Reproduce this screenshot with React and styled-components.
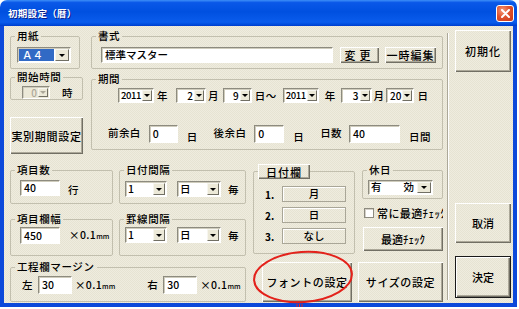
import React from 'react';
import styled, { createGlobalStyle, css } from 'styled-components';

const GlobalStyle = createGlobalStyle`
  html, body {
    margin: 0;
    padding: 0;
    background: #fff;
  }
  body {
    font-family: "Noto Sans CJK JP", "Noto Sans", sans-serif;
    font-weight: 500;
    color: #000;
  }
`;

const sunken = css`
  box-sizing: border-box;
  border: 1px solid;
  border-color: #8d8b7f #fff #fff #8d8b7f;
  box-shadow: inset 1px 1px #cfccbc;
`;

const Window = styled.div`
  position: relative;
  width: 517px;
  height: 307px;
  display: flex;
  flex-direction: column;
`;

const TitleBar = styled.div`
  height: 26px;
  flex: none;
  box-sizing: border-box;
  display: flex;
  align-items: center;
  justify-content: space-between;
  padding: 0 3px 0 8px;
  border-radius: 7px 7px 0 0;
  background: linear-gradient(
    to bottom,
    #3d8ff8 0%,
    #0a58e8 10%,
    #0050e0 45%,
    #0a5cec 85%,
    #004cdc 94%,
    #003ccc 100%
  );
`;

const Title = styled.span`
  color: #fff;
  font-size: 9.5px;
  font-weight: bold;
  letter-spacing: 0.3px;
  text-shadow: 1px 1px #0a1c8a;
`;

const CloseButton = styled.div`
  width: 18px;
  height: 17px;
  box-sizing: border-box;
  border: 1px solid #fff;
  border-radius: 3px;
  background: radial-gradient(circle at 35% 30%, #f39a7a 0%, #e0532e 45%, #c8381a 100%);
  display: flex;
  align-items: center;
  justify-content: center;
`;

const Frame = styled.div`
  flex: 1;
  display: flex;
  border: 4px solid #0b48da;
  border-top: 0;
  padding: 4px 0 0 6px;
  background-color: #ece9d8;
  background-image: repeating-conic-gradient(#efecdf 0 25%, #e6e3d2 0 50%);
  background-size: 2px 2px;
`;

const Main = styled.div`
  width: 433px;
  flex: none;
  display: flex;
  flex-direction: column;
`;

const Row = styled.div`
  display: flex;
  align-items: flex-start;
  margin-top: ${(p) => p.$mt || 0}px;
`;

const Column = styled.div`
  width: ${(p) => p.$w}px;
  flex: none;
  display: flex;
  flex-direction: column;
  margin-left: ${(p) => p.$ml || 0}px;
`;

const Group = styled.fieldset`
  box-sizing: border-box;
  width: ${(p) => p.$w}px;
  height: ${(p) => p.$h}px;
  flex: none;
  margin: ${(p) => p.$mt || 0}px 0 0 ${(p) => p.$ml || 0}px;
  padding: 0;
  min-inline-size: 0;
  border: 1px solid #c2bfae;
  border-radius: 2px;
`;

const Legend = styled.legend`
  padding: 0 2px;
  margin-left: ${(p) => (p.$ml === undefined ? 4 : p.$ml)}px;
  height: ${(p) => p.$h || 12}px;
  font-size: 10.5px;
  line-height: 12px;
  letter-spacing: 0.6px;
  ${(p) =>
    p.$bare &&
    css`
      padding: 0;
    `}
`;

const Line = styled.div`
  display: flex;
  align-items: ${(p) => p.$align || 'center'};
  padding-left: ${(p) => p.$pl || 0}px;
  margin-top: ${(p) => p.$mt || 0}px;
`;

const Text = styled.span`
  flex: none;
  font-size: ${(p) => p.$size || 10.5}px;
  line-height: 12px;
  letter-spacing: 0.4px;
  white-space: nowrap;
  margin-left: ${(p) => p.$ml || 0}px;
  margin-top: ${(p) => p.$mt || 0}px;
`;

const Small = styled.span`
  font-size: 7px;
  letter-spacing: 0;
`;

const Field = styled.div`
  ${sunken};
  width: ${(p) => p.$w}px;
  height: ${(p) => p.$h || 16}px;
  flex: none;
  margin-left: ${(p) => p.$ml || 0}px;
  background: #fff;
  padding-left: 3px;
  font-size: 10.5px;
  line-height: ${(p) => (p.$h || 16) - 2}px;
  white-space: nowrap;
  overflow: hidden;
`;

const Combo = styled.div`
  ${sunken};
  width: ${(p) => p.$w}px;
  height: ${(p) => p.$h || 16}px;
  flex: none;
  display: flex;
  margin-left: ${(p) => p.$ml || 0}px;
  padding: 1px;
  background: ${(p) => (p.$disabled ? '#ece9d8' : '#fff')};
`;

const ComboText = styled.div`
  flex: 1;
  min-width: 0;
  display: flex;
  align-items: center;
  justify-content: ${(p) => (p.$right ? 'flex-end' : p.$spread ? 'space-between' : 'flex-start')};
  padding: 0 ${(p) => (p.$spread ? 3 : 1)}px 0 1px;
  font-size: ${(p) => p.$size || 10.5}px;
  letter-spacing: ${(p) => p.$ls || 0}px;
  line-height: 1;
  white-space: nowrap;
  color: ${(p) => (p.$disabled ? '#aca899' : '#000')};
  ${(p) =>
    p.$selected &&
    css`
      background: #316ac5;
      color: #fff;
      margin-right: 1px;
      padding-left: 3px;
    `}
`;

const DropButton = styled.div`
  width: ${(p) => p.$w || 10}px;
  flex: none;
  box-sizing: border-box;
  border: 1px solid;
  border-color: #f7f6f0 #716f64 #716f64 #f7f6f0;
  background: #ece9d8;
  display: flex;
  align-items: center;
  justify-content: center;
  &::after {
    content: '';
    border-left: 3px solid transparent;
    border-right: 3px solid transparent;
    border-top: 3px solid ${(p) => (p.$disabled ? '#aca899' : '#000')};
  }
`;

const Button = styled.button`
  box-sizing: border-box;
  width: ${(p) => p.$w}px;
  height: ${(p) => p.$h}px;
  flex: none;
  margin: ${(p) => p.$mt || 0}px 0 0 ${(p) => p.$ml || 0}px;
  padding: 0;
  border: 0;
  background: transparent;
  font-family: inherit;
  font-weight: 500;
  font-size: 11px;
  letter-spacing: ${(p) => (p.$ls === undefined ? 0.6 : p.$ls)}px;
  color: #000;
  white-space: nowrap;
  display: flex;
  align-items: center;
  justify-content: center;
  box-shadow: inset 1px 1px #fff, inset -1px -1px #716f64, inset -2px -2px #aca899;
  ${(p) =>
    p.$default &&
    css`
      border: 1px solid #1a1a1a;
    `}
`;

const DateRow = styled.div`
  display: flex;
  align-items: center;
  padding-left: 11px;
  margin-top: ${(p) => p.$mt || 0}px;
`;

const DateNo = styled.span`
  width: 17px;
  flex: none;
  font-size: 10px;
  font-weight: bold;
`;

const DateCell = styled.div`
  box-sizing: border-box;
  width: 64px;
  height: 16px;
  border: 1px solid #a9a697;
  box-shadow: inset 1px 1px #fff;
  font-size: 10.5px;
  line-height: 14px;
  text-align: center;
`;

const CheckRow = styled.div`
  display: flex;
  align-items: center;
  width: 79px;
  height: 12px;
  margin: ${(p) => p.$mt || 0}px 0 0 2px;
  overflow: hidden;
`;

const CheckBox = styled.span`
  box-sizing: border-box;
  width: 10px;
  height: 10px;
  flex: none;
  background: #fff;
  border: 1px solid #8d8b7f;
  box-shadow: inset 1px 1px #d4d0c8;
`;

const Separator = styled.div`
  width: 0;
  flex: none;
  border-left: 1px solid #aca899;
  border-right: 1px solid #fff;
  margin: 3px 6px 3px 4px;
`;

const Side = styled.div`
  width: 56px;
  flex: none;
  display: flex;
  flex-direction: column;
`;

const Marker = styled.svg`
  position: absolute;
  left: 250px;
  top: 248px;
  width: 110px;
  height: 61px;
  overflow: visible;
  pointer-events: none;
`;

const Unit = ({ ml }) => (
  <Text $ml={ml}>
    ×0.1<Small>mm</Small>
  </Text>
);

const Year = ({ ml }) => (
  <Combo $w={36} $h={15} $ml={ml}>
    <ComboText $size={9.5} $ls={-0.4}>2011</ComboText>
    <DropButton />
  </Combo>
);

const Day = ({ w, ml, value }) => (
  <Combo $w={w} $h={15} $ml={ml}>
    <ComboText $right $size={10}>{value}</ComboText>
    <DropButton />
  </Combo>
);

export default function App() {
  return (
    <>
      <GlobalStyle />
      <Window>
        <TitleBar>
          <Title>初期設定（暦）</Title>
          <CloseButton>
            <svg width="9" height="9" viewBox="0 0 9 9">
              <path d="M1 1 L8 8 M8 1 L1 8" stroke="#fff" strokeWidth="2" strokeLinecap="round" />
            </svg>
          </CloseButton>
        </TitleBar>
        <Frame>
          <Main>
            <Row>
              <Group $w={70} $h={39}>
                <Legend>用紙</Legend>
                <Line $mt={5} $pl={6}>
                  <Combo $w={54} $h={16}>
                    <ComboText $selected>Ａ４</ComboText>
                    <DropButton $w={14} />
                  </Combo>
                </Line>
              </Group>
              <Group $w={352} $h={39} $ml={11}>
                <Legend>書式</Legend>
                <Line $mt={5} $pl={9}>
                  <Field $w={232} $h={16}>標準マスター</Field>
                  <Button $w={39} $h={16} $ml={7} $ls={4}>変更</Button>
                  <Button $w={51} $h={16} $ml={6} $ls={1}>一時編集</Button>
                </Line>
              </Group>
            </Row>

            <Row $mt={2}>
              <Column $w={73}>
                <Group $w={73} $h={29}>
                  <Legend>開始時間</Legend>
                  <Line $mt={3} $pl={11}>
                    <Combo $w={28} $h={13} $disabled>
                      <ComboText $right $disabled $size={10}>0</ComboText>
                      <DropButton $disabled />
                    </Combo>
                    <Text $ml={12}>時</Text>
                  </Line>
                </Group>
                <Button $w={73} $h={37} $mt={17} $ls={0.7}>実別期間設定</Button>
              </Column>
              <Group $w={352} $h={77} $ml={8} $mt={2}>
                <Legend>期間</Legend>
                <Line $mt={3} $pl={26}>
                  <Year />
                  <Text $ml={3}>年</Text>
                  <Day w={30} ml={8} value="2" />
                  <Text $ml={2}>月</Text>
                  <Day w={29} ml={4} value="9" />
                  <Text $ml={3}>日～</Text>
                  <Year ml={6} />
                  <Text $ml={6}>年</Text>
                  <Day w={31} ml={5} value="3" />
                  <Text $ml={2}>月</Text>
                  <Day w={28} ml={2} value="20" />
                  <Text $ml={3}>日</Text>
                </Line>
                <Line $mt={22} $pl={16} $align="flex-start">
                  <Text $mt={2}>前余白</Text>
                  <Field $w={29} $h={18} $ml={8}>0</Field>
                  <Text $ml={9} $mt={6}>日</Text>
                  <Text $ml={16} $mt={2}>後余白</Text>
                  <Field $w={30} $h={18} $ml={8}>0</Field>
                  <Text $ml={9} $mt={6}>日</Text>
                  <Text $ml={16} $mt={2}>日数</Text>
                  <Field $w={51} $h={18} $ml={7}>40</Field>
                  <Text $ml={9} $mt={6}>日間</Text>
                </Line>
              </Group>
            </Row>

            <Row $mt={10}>
              <Column $w={103}>
                <Group $w={103} $h={40}>
                  <Legend>項目数</Legend>
                  <Line $mt={4} $pl={9}>
                    <Field $w={40} $h={16}>40</Field>
                    <Text $ml={8} $mt={3}>行</Text>
                  </Line>
                </Group>
                <Group $w={103} $h={43} $mt={9}>
                  <Legend>項目欄幅</Legend>
                  <Line $mt={2} $pl={9}>
                    <Field $w={40} $h={17}>450</Field>
                    <Unit ml={9} />
                  </Line>
                </Group>
              </Column>
              <Column $w={127} $ml={6}>
                <Group $w={127} $h={40}>
                  <Legend>日付間隔</Legend>
                  <Line $mt={5} $pl={5}>
                    <Combo $w={42} $h={16}>
                      <ComboText>1</ComboText>
                      <DropButton $w={12} />
                    </Combo>
                    <Combo $w={44} $h={16} $ml={10}>
                      <ComboText>日</ComboText>
                      <DropButton $w={12} />
                    </Combo>
                    <Text $ml={7} $mt={2}>毎</Text>
                  </Line>
                </Group>
                <Group $w={127} $h={43} $mt={9}>
                  <Legend>罫線間隔</Legend>
                  <Line $mt={2} $pl={5}>
                    <Combo $w={42} $h={16}>
                      <ComboText>1</ComboText>
                      <DropButton $w={12} />
                    </Combo>
                    <Combo $w={44} $h={16} $ml={10}>
                      <ComboText>日</ComboText>
                      <DropButton $w={12} />
                    </Combo>
                    <Text $ml={7} $mt={2}>毎</Text>
                  </Line>
                </Group>
              </Column>
              <Group $w={102} $h={90} $ml={7}>
                <Legend $ml={4} $h={15} $bare>
                  <Button $w={52} $h={15} $ls={1}>日付欄</Button>
                </Legend>
                <DateRow $mt={7}>
                  <DateNo>1.</DateNo>
                  <DateCell>月</DateCell>
                </DateRow>
                <DateRow $mt={5}>
                  <DateNo>2.</DateNo>
                  <DateCell>日</DateCell>
                </DateRow>
                <DateRow $mt={5}>
                  <DateNo>3.</DateNo>
                  <DateCell>なし</DateCell>
                </DateRow>
              </Group>
              <Column $w={81} $ml={7}>
                <Group $w={81} $h={35}>
                  <Legend>休日</Legend>
                  <Line $mt={4} $pl={5}>
                    <Combo $w={65} $h={15}>
                      <ComboText $spread>
                        <span>有</span>
                        <span>効</span>
                      </ComboText>
                      <DropButton $w={14} />
                    </Combo>
                  </Line>
                </Group>
                <CheckRow $mt={8}>
                  <CheckBox />
                  <Text $ml={3} $size={11}>常に最適ﾁｪｯｸ</Text>
                </CheckRow>
                <Button $w={80} $h={24} $mt={8} $ml={1} $ls={0}>最適ﾁｪｯｸ</Button>
              </Column>
            </Row>

            <Row $mt={5}>
              <Group $w={236} $h={41}>
                <Legend>工程欄マージン</Legend>
                <Line $mt={3} $pl={11}>
                  <Text>左</Text>
                  <Field $w={34} $h={18} $ml={5}>30</Field>
                  <Unit ml={3} />
                  <Text $ml={32}>右</Text>
                  <Field $w={34} $h={18} $ml={5}>30</Field>
                  <Unit ml={3} />
                </Line>
              </Group>
              <Button $w={90} $h={40} $ml={16} $mt={1}>フォントの設定</Button>
              <Button $w={85} $h={40} $ml={6} $mt={1}>サイズの設定</Button>
            </Row>
          </Main>
          <Separator />
          <Side>
            <Button $w={56} $h={42} $ls={1}>初期化</Button>
            <Button $w={56} $h={40} $mt={131} $ls={0}>取消</Button>
            <Button $w={56} $h={42} $mt={13} $ls={0} $default>決定</Button>
          </Side>
        </Frame>
        <Marker viewBox="0 0 110 61">
          <ellipse cx="53" cy="29" rx="49" ry="25" fill="none" stroke="#e3221b" strokeWidth="2" transform="rotate(-4 53 29)" />
          <path d="M47 56 V61 M49.5 56 V61 M52 56 V61" stroke="#e3221b" strokeWidth="1" />
        </Marker>
      </Window>
    </>
  );
}
